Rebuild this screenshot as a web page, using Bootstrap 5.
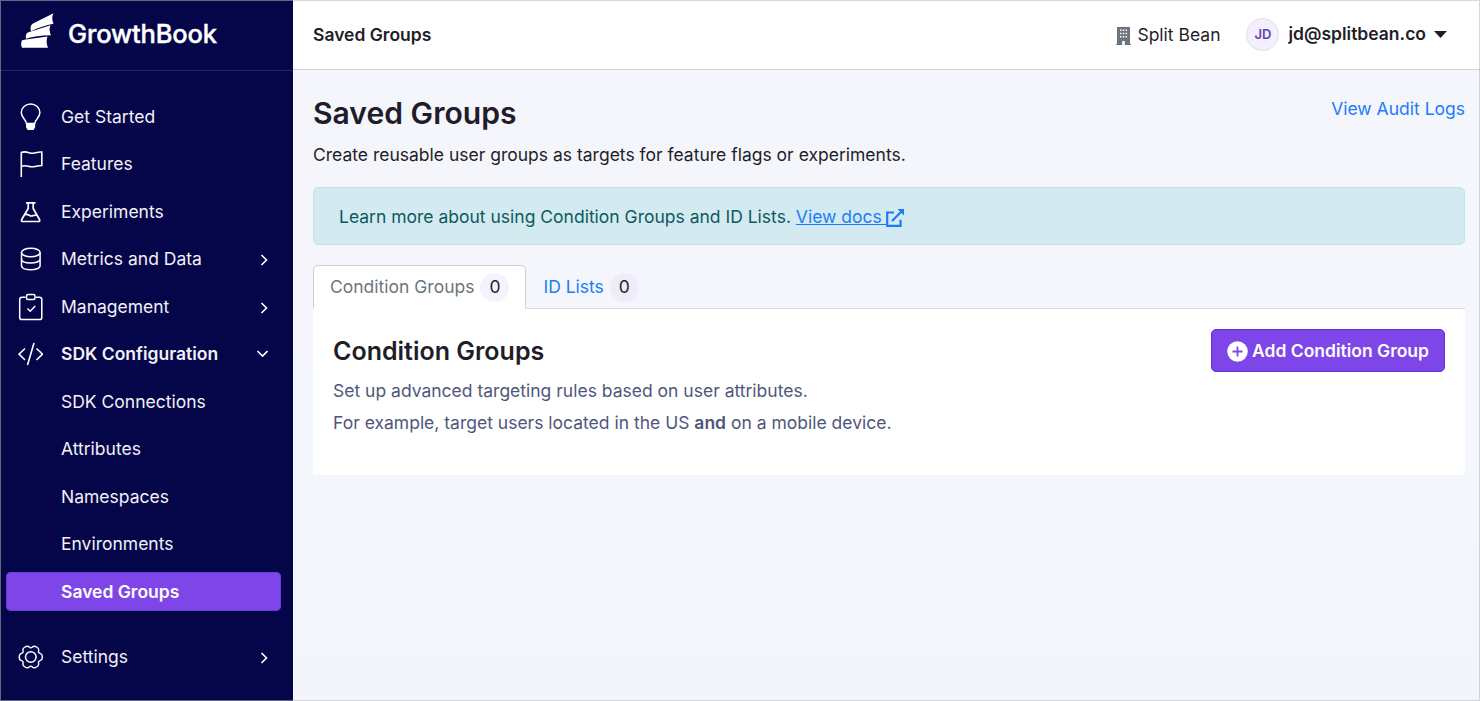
<!DOCTYPE html>
<html lang="en">
<head>
<meta charset="utf-8">
<meta name="viewport" content="width=device-width, initial-scale=1">
<title>Saved Groups</title>
<link href="https://cdn.jsdelivr.net/npm/bootstrap@5.3.0/dist/css/bootstrap.min.css" rel="stylesheet">
<style>
  body { font-family: Inter, "Liberation Sans", sans-serif; font-size: 17.5px; color: #1f1d29; height: 100vh; overflow: hidden; background: linear-gradient(#f5f6fc, #f2f6fa); }
  body::after { content: ""; position: fixed; inset: 0; border: 1px solid rgba(183,183,190,.54); pointer-events: none; }
  a { color: #1a7cfa; }
  .side { width: 293px; background: #050549; color: #f1f1f6; }
  .brand { height: 71px; padding: 13px 0 0 20px; border-bottom: 1px solid #26264f; }
  .brand-name { font-size: 25.5px; font-weight: 500; letter-spacing: -.15px; line-height: 30px; padding: 6px 0 0 13px; color: #fff; -webkit-text-stroke: .4px #fff; }
  .menu { padding-top: 21.9px; }
  .menu .nav-link { height: 47.5px; padding: 0 25px 0 18px; color: #f1f1f6; }
  .menu .pic { width: 25px; margin-right: 18px; }
  .menu .sub { height: 39.5px; margin: 4px 12px 4px 6px; padding: 0 0 0 55px; border-radius: 5px; }
  .menu .sub.active { background: #7e45e8; box-shadow: inset 0 0 0 1px #6b3bd6; color: #fff; font-weight: 600; }
  .menu .settings { margin-top: 17.5px; }
  .chev { margin-top: 2px; }
  .top { height: 70px; background: #fff; border-bottom: 1px solid #d3d4da; padding: 0 33px 0 20px; }
  .top .low { padding-top: 2px; }
  .org { margin: 0 26px 0 6px; }
  .user { margin: 0 8px 0 9px; }
  .semi { font-weight: 600; }
  .avatar { width: 33px; height: 33px; background: #f3effd; border: 1px solid #dedee9; color: #6042b5; font-size: 13px; font-weight: 600; }
  .page { padding: 20px 15px 0 20px; }
  h1 { font-size: 30.1px; font-weight: 600; line-height: 40px; margin: 3px 0 9px; }
  .audit { padding-top: 6px; }
  .intro { line-height: 26px; margin-bottom: 19px; }
  .note { height: 58px; padding: 2px 25px 0; background: #d3ebf0; border: 1px solid #bfe6ec; border-radius: 5px; color: #0e5862; margin-bottom: 20px; }
  .docs svg { margin-left: -1px; }
  .nav-tabs { --bs-nav-tabs-border-color: #d5d8dc; --bs-nav-tabs-border-radius: 5px; height: 44px; }
  .nav-tabs .nav-link { height: 44px; padding: 1px 16px 0; color: #1a7cfa; }
  .nav-tabs .nav-link.active { background: #fff; color: #6c757d; border-color: #ced2d6 #ced2d6 #fff; }
  .count { width: 29px; height: 29px; background: #eeecf8; color: #1f1d29; margin-left: 6px; }
  .active .count { background: #f5f2fd; }
  .panel { background: #fff; height: 166px; padding: 20px; }
  h2 { font-size: 25px; font-weight: 600; line-height: 30px; padding-top: 7px; }
  .panel p { color: #50567b; line-height: 31.5px; margin: 0; }
  .btn-add { height: 43px; margin-bottom: 3px; padding: 2px 15px 0; background: #7e45e8; border: 1px solid #6430d2; border-radius: 5px; color: #fff; font-size: 17.5px; font-weight: 600; }
</style>
</head>
<body class="d-flex">
<aside class="side d-flex flex-column flex-shrink-0">
  <div class="brand d-flex">
    <svg width="35" height="36" viewBox="0 0 35 36" fill="#fff"><path d="M11 18.300Q9.500 12.500 13 10.500L33.500.3Q31 5 33.500 10.800 22 12.800 11 18.300zM6 25.700Q5 20.500 8.500 19.300L30.500 12.200Q28.500 17 31 22.200 16 22.500 6 25.700zM2 34.800Q.5 32 1.500 28 2 27 4 26.800L27.500 23.600Q25.500 29 28 34.800z"/></svg>
    <div class="brand-name">GrowthBook</div>
  </div>
  <nav class="menu nav flex-column flex-nowrap">
    <a class="nav-link d-flex align-items-center" href="#"><svg class="pic" height="28" viewBox="0 0 25 28" fill="none" stroke="#fff" stroke-width="1.500"><path d="M8.500 20.500C8.500 17 3.300 14.500 3.300 9.800a9.300 8.800 0 0 1 18.600 0c0 4.700-5.200 7.200-5.200 10.700z"/><path d="M8.800 20.800h7.600v3.200l-1.300 2.300H10l-1.200-2.300z" fill="#fff"/></svg>Get Started</a>
    <a class="nav-link d-flex align-items-center" href="#"><svg class="pic" height="28" viewBox="0 0 25 28" fill="none" stroke="#fff" stroke-width="1.600"><path d="M3.300 27V2.500c5-2 6.500.5 10 .8 3.500.2 5.500-1.600 10.500-1.300v13.500c-5 0-6 1.500-10.500 1.300-3.500-.3-5-2-10-.5"/></svg>Features</a>
    <a class="nav-link d-flex align-items-center" href="#"><svg class="pic" height="26" viewBox="0 0 25 26" fill="none" stroke="#fff" stroke-width="1.700" stroke-linejoin="round"><path d="M8 3.800h9.500M10.200 4v5.500L3.700 20.500q-.8 2 1.300 2h15.300q2 0 1.200-2L15.200 9.500V4M7 15.800c3-1.500 4 1.200 6.500 1.200 2 0 3-1.500 5.300-.8"/></svg>Experiments</a>
    <a class="nav-link d-flex align-items-center" href="#"><svg class="pic" height="26" viewBox="0 0 25 26" fill="none" stroke="#fff" stroke-width="1.500"><ellipse cx="12.800" cy="6.500" rx="9.300" ry="4.300"/><path d="M3.500 6.500v13c0 5.700 18.600 5.700 18.600 0v-13M3.500 13c0 5.300 18.600 5.300 18.600 0"/></svg>Metrics and Data<svg class="ms-auto chev" width="8" height="12" viewBox="0 0 8 12" fill="none" stroke="#fff" stroke-width="1.600"><path d="M1.500 1l5 5-5 5"/></svg></a>
    <a class="nav-link d-flex align-items-center" href="#"><svg class="pic" height="28" viewBox="0 0 25 28" fill="none" stroke="#fff" stroke-width="1.500"><path d="M7.500 4.300H4q-2.300 0-2.300 2.300v17.800q0 2.200 2.300 2.200h17.500q2.300 0 2.300-2.200V6.600q0-2.300-2.300-2.300H18"/><rect x="8.500" y="1.500" width="8.500" height="5" rx="1.500"/><path d="M9.500 15.500l2.700 2.700 5-5.200"/></svg>Management<svg class="ms-auto chev" width="8" height="12" viewBox="0 0 8 12" fill="none" stroke="#fff" stroke-width="1.600"><path d="M1.500 1l5 5-5 5"/></svg></a>
    <a class="nav-link semi d-flex align-items-center" href="#"><svg class="pic" height="24" viewBox="0 0 25 24" fill="none" stroke="#fff" stroke-width="1.600"><path d="M7 6.500l-6 5.700 6 5.800M18.500 6.500l6 5.700-6 5.800M16 1L9.500 23"/></svg>SDK Configuration<svg class="ms-auto" width="12" height="8" viewBox="0 0 12 8" fill="none" stroke="#fff" stroke-width="1.600"><path d="M1.500 1l5 5 5-5"/></svg></a>
    <a class="nav-link sub d-flex align-items-center" href="#">SDK Connections</a>
    <a class="nav-link sub d-flex align-items-center" href="#">Attributes</a>
    <a class="nav-link sub d-flex align-items-center" href="#">Namespaces</a>
    <a class="nav-link sub d-flex align-items-center" href="#">Environments</a>
    <a class="nav-link sub active d-flex align-items-center" href="#">Saved Groups</a>
    <a class="nav-link settings d-flex align-items-center" href="#"><svg class="pic" height="26" viewBox="-12.800 -13 25 26" fill="none" stroke="#fff" stroke-width="1.500" stroke-linejoin="round"><circle r="5.300"/><path transform="scale(.92)" d="M8.490 6.850Q9.190 9.190 6.280 10.880 3.360 12.560 1.680 10.780 0 9-1.680 10.780-3.360 12.560-6.280 10.880-9.190 9.190-8.490 6.850-7.790 4.500-10.180 3.930-12.560 3.360-12.560 0-12.560-3.360-10.180-3.930-7.790-4.500-8.490-6.850-9.190-9.190-6.280-10.880-3.360-12.560-1.680-10.780 0-9 1.680-10.780 3.360-12.560 6.280-10.880 9.190-9.190 8.490-6.850 7.790-4.500 10.180-3.930 12.560-3.360 12.560 0 12.560 3.360 10.180 3.930 7.790 4.500 8.490 6.850z"/></svg>Settings<svg class="ms-auto chev" width="8" height="12" viewBox="0 0 8 12" fill="none" stroke="#fff" stroke-width="1.600"><path d="M1.500 1l5 5-5 5"/></svg></a>
  </nav>
</aside>
<div class="flex-grow-1">
  <header class="top d-flex align-items-center">
    <span class="semi low me-auto">Saved Groups</span>
    <svg class="chev" width="15" height="18" viewBox="0 0 15 18"><path fill="#6c757d" d="M1 0h13v17h1v1H8.800v-4H6.200v4H0v-1h1z"/><path fill="#fff" d="M4 2.500h1.500V4H4zM6.800 2.500h1.500V4H6.800zM9.600 2.500h1.500V4H9.600zM4 5.700h1.500v1.500H4zM6.800 5.700h1.500v1.500H6.800zM9.600 5.700h1.500v1.500H9.600zM4 8.900h1.500v1.500H4zM6.800 8.900h1.500v1.500H6.800zM9.600 8.900h1.500v1.500H9.600z"/></svg>
    <span class="org low">Split Bean</span>
    <span class="avatar rounded-circle d-flex align-items-center justify-content-center">JD</span>
    <span class="user semi">jd@splitbean.co</span>
    <svg width="13" height="7" viewBox="0 0 13 7"><path fill="#1f1d29" d="M0 0h13L6.500 7z"/></svg>
  </header>
  <main class="page">
    <div class="d-flex justify-content-between"><h1>Saved Groups</h1><a class="audit text-decoration-none" href="#">View Audit Logs</a></div>
    <p class="intro">Create reusable user groups as targets for feature flags or experiments.</p>
    <div class="note d-flex align-items-center"><span>Learn more about using Condition Groups and ID Lists. <a class="docs" href="#">View docs <svg width="18" height="18" viewBox="0 0 18 18" fill="none" stroke="#1a7cfa" stroke-width="2.200"><path d="M8 3.500H1.200V16.800h13.300v-6M6 12L15.500 2.500"/><path d="M11.500 0H18v6.500z" fill="#1a7cfa" stroke="none"/></svg></a></span></div>
    <ul class="nav nav-tabs">
      <li class="nav-item"><a class="nav-link active d-flex align-items-center" href="#">Condition Groups<span class="count rounded-circle d-flex align-items-center justify-content-center">0</span></a></li>
      <li class="nav-item"><a class="nav-link d-flex align-items-center" href="#">ID Lists<span class="count rounded-circle d-flex align-items-center justify-content-center">0</span></a></li>
    </ul>
    <section class="panel">
      <div class="d-flex justify-content-between align-items-start"><h2 class="mb-0">Condition Groups</h2>
        <button class="btn-add d-flex align-items-center"><svg class="me-1" width="21" height="21" viewBox="0 0 21 21"><circle cx="10.500" cy="10.500" r="10.300" fill="#fff"/><path d="M5.500 10.500h10M10.500 5.500v10" stroke="#7e45e8" stroke-width="1.800"/></svg>Add Condition Group</button></div>
      <p>Set up advanced targeting rules based on user attributes.</p>
      <p>For example, target users located in the US <span class="semi">and</span> on a mobile device.</p>
    </section>
  </main>
</div>
<script src="https://cdn.jsdelivr.net/npm/bootstrap@5.3.0/dist/js/bootstrap.bundle.min.js"></script>
</body>
</html>
